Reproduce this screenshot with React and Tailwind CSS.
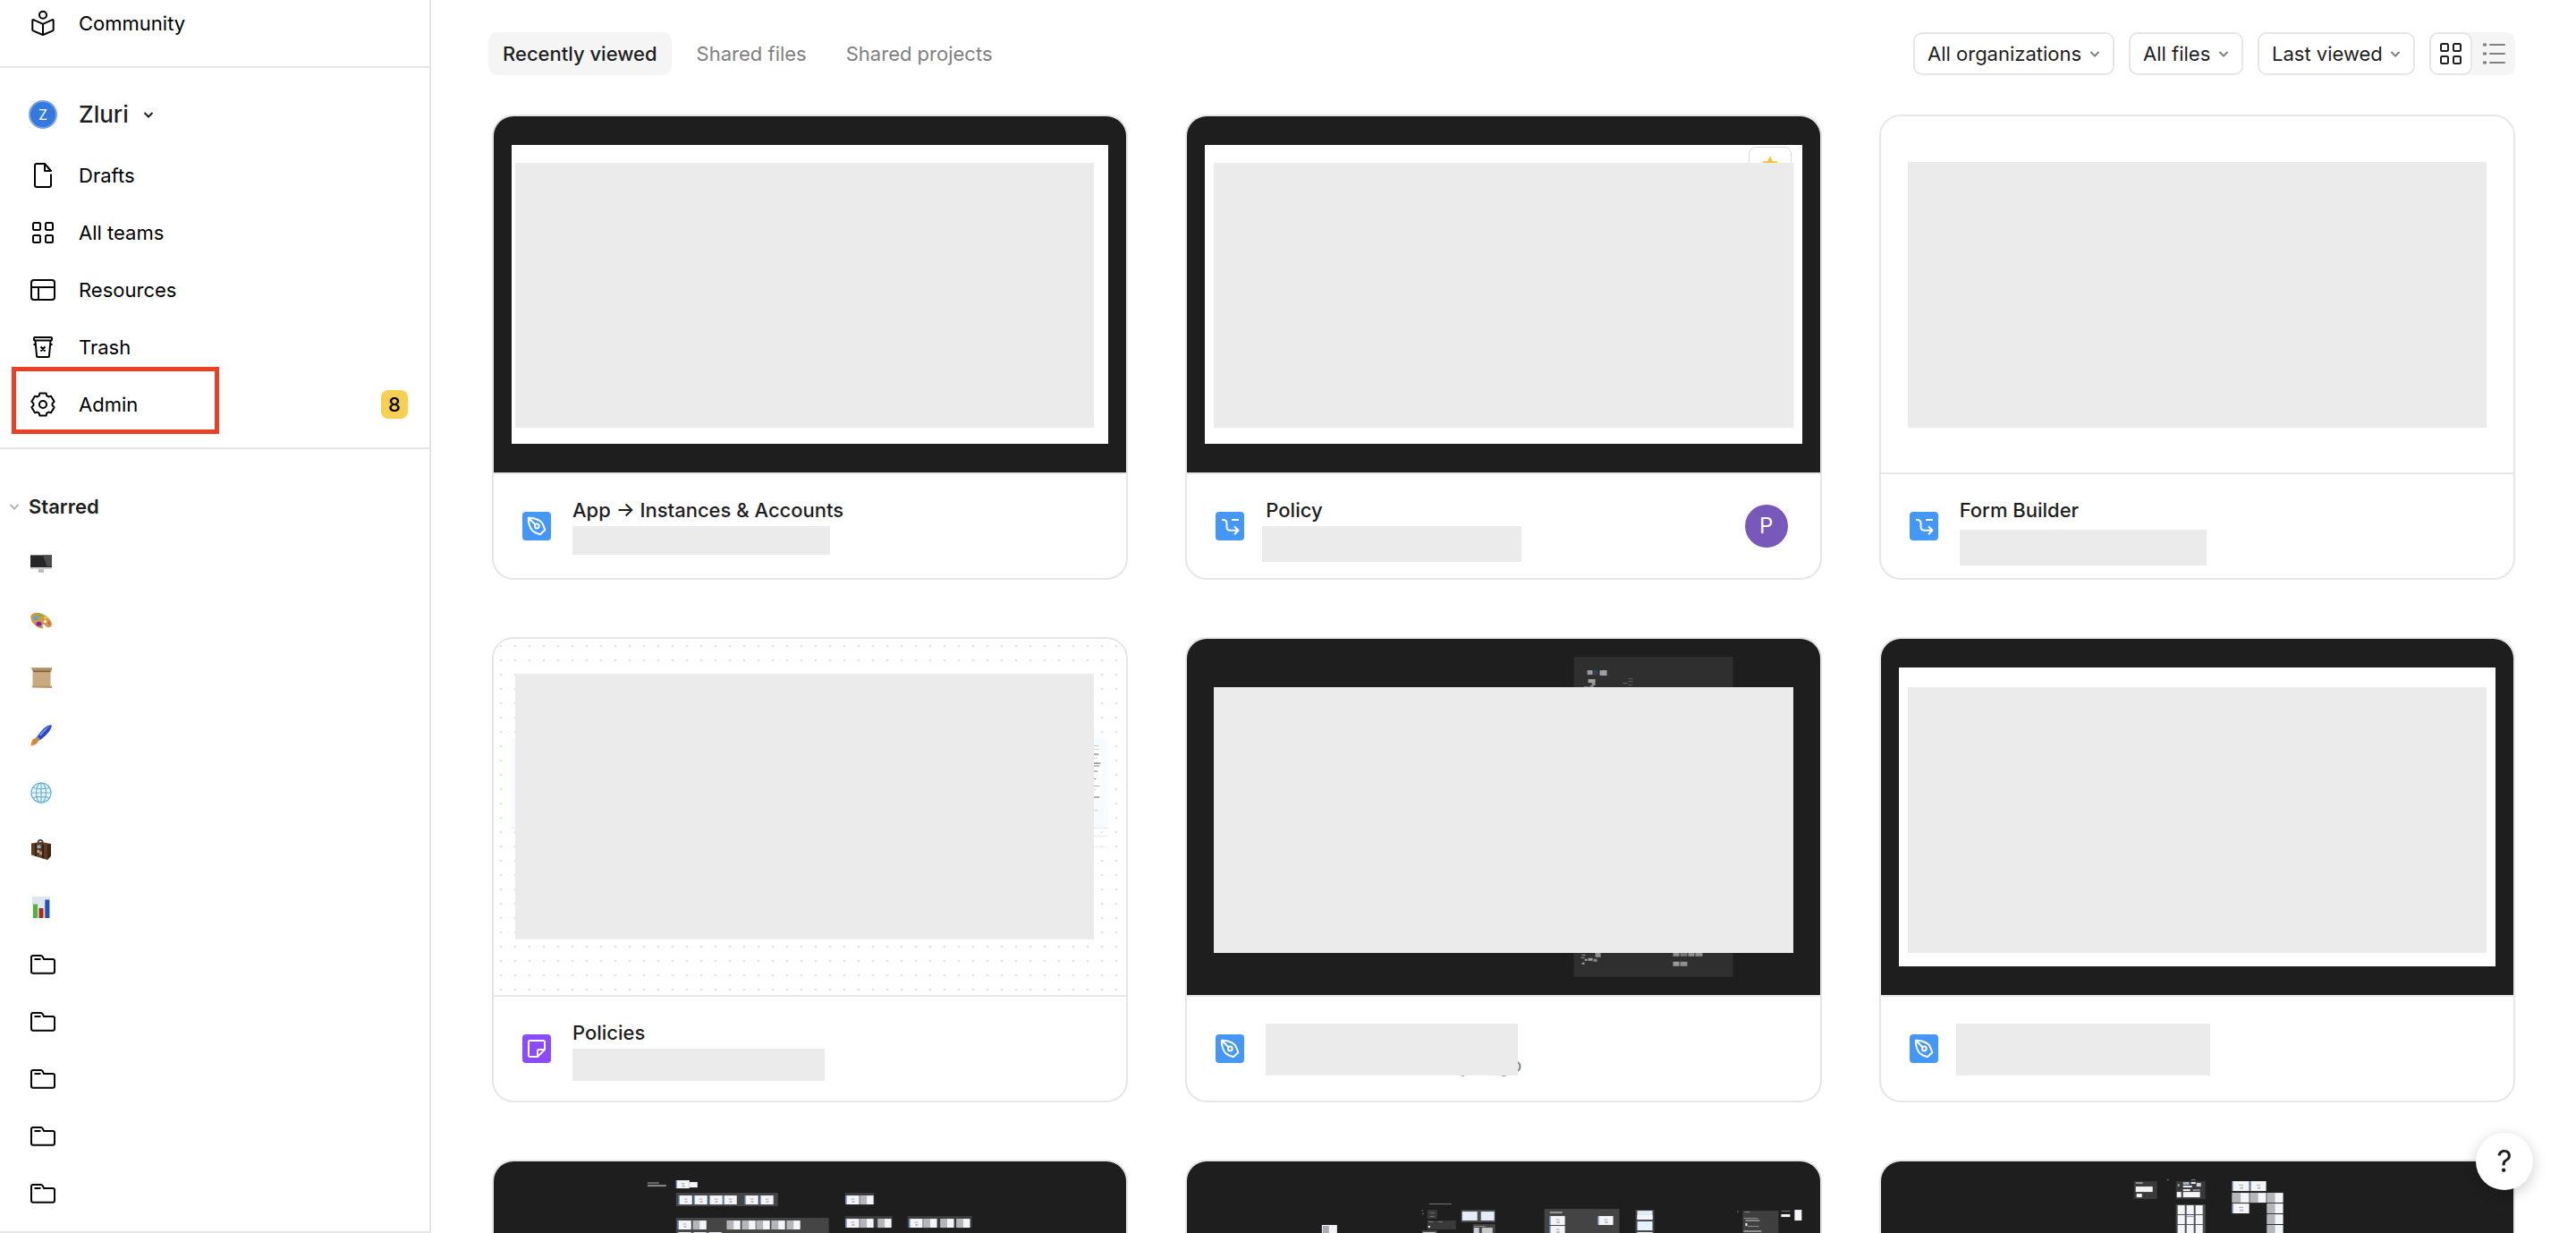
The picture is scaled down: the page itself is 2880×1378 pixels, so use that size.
import React, { useState } from 'react';

const gearPoints = [0, 60, 120, 180, 240, 300]
  .flatMap((angle) => [
    [10.6, angle - 24],
    [13, angle - 16],
    [13, angle + 16],
    [10.6, angle + 24]
  ])
  .map(([r, deg]) => {
    const rad = (deg * Math.PI) / 180;
    return `${(16 + r * Math.sin(rad)).toFixed(2)},${(16 - r * Math.cos(rad)).toFixed(2)}`;
  })
  .join(' ');

function Icon({ children }) {
  return (
    <svg
      className="size-8 shrink-0"
      viewBox="0 0 32 32"
      fill="none"
      stroke="currentColor"
      strokeWidth="2"
      strokeLinejoin="round"
      aria-hidden="true"
    >
      {children}
    </svg>
  );
}

function CommunityIcon() {
  return (
    <Icon>
      <circle cx="16" cy="6.8" r="4" />
      <path d="M16 16.8 5.6 12.1c-.7-.3-1.3.1-1.3.9v10.3c0 .5.2.8.7 1L16 29l11-4.7c.5-.2.7-.5.7-1V13c0-.8-.6-1.2-1.3-.9L16 16.8V29" />
    </Icon>
  );
}

function FileIcon() {
  return (
    <Icon>
      <path d="M25 14.5V27a2 2 0 0 1-2 2H9a2 2 0 0 1-2-2V5a2 2 0 0 1 2-2h9l7 8h-7V3" />
    </Icon>
  );
}

function GridIcon() {
  return (
    <Icon>
      <rect x="5" y="5" width="8" height="8" rx="1.5" />
      <rect x="19" y="5" width="8" height="8" rx="1.5" />
      <rect x="5" y="19" width="8" height="8" rx="1.5" />
      <rect x="19" y="19" width="8" height="8" rx="1.5" />
    </Icon>
  );
}

function ListIcon() {
  return (
    <Icon>
      <path d="M12 6h16M12 16h16M12 26h16" strokeLinecap="round" />
      <path d="M4 6h4M4 16h4M4 26h4" strokeWidth="3" />
    </Icon>
  );
}

function ResourcesIcon() {
  return (
    <Icon>
      <rect x="3" y="5" width="26" height="22" rx="3" />
      <path d="M3 13h26M11 13v14" />
    </Icon>
  );
}

function TrashIcon() {
  return (
    <Icon>
      <rect x="6" y="5" width="20" height="3.5" rx="1" />
      <path d="M7.5 9 9 25.5a1.5 1.5 0 0 0 1.5 1.5h11a1.5 1.5 0 0 0 1.5-1.5L24.5 9M5.5 13H8M24 13h2.5M13.5 15.5l5 5M18.5 15.5l-5 5" />
    </Icon>
  );
}

function GearIcon() {
  return (
    <Icon>
      <polygon points={gearPoints} />
      <circle cx="16" cy="16" r="4" />
    </Icon>
  );
}

function FolderIcon() {
  return (
    <Icon>
      <path d="M3 23.7V8a2 2 0 0 1 2-2h8.8c.8 0 1.3.3 1.7 1l1.6 3H27a2 2 0 0 1 2 2v11.700a2 2 0 0 1-2 2H5a2 2 0 0 1-2-2ZM6.5 10h7" />
    </Icon>
  );
}

function Chevron() {
  return (
    <svg className="h-2 w-3 shrink-0" viewBox="0 0 12 8" fill="none" stroke="currentColor" strokeWidth="2" aria-hidden="true">
      <path d="m1.5 2 4.5 4.5L10.5 2" />
    </svg>
  );
}

function Emoji({ children }) {
  return (
    <svg className="size-8 shrink-0" viewBox="0 0 32 32" aria-hidden="true">
      {children}
    </svg>
  );
}

const starred = [
  {
    name: 'Desktop',
    icon: (
      <Emoji>
        <path d="M11 21h6v5h-6z" fill="#b9bbc0" />
        <rect x="2" y="6" width="24" height="16" rx="1" fill="#cfcfd6" />
        <path d="M2 6.5h24V20H2z" fill="#262626" />
        <path d="M16 6.5h10V19h-5.5z" fill="#4b4b4b" />
      </Emoji>
    )
  },
  {
    name: 'Palette',
    icon: (
      <Emoji>
        <path d="M2.3 11C3 7 9 5.500 15 8c6 2 11 8 11 12 0 3-4 4-6 2.500-1.500-1-2-3-4-2.500-1.500.6 1.200 2.500-.2 4C13 25.500 2 20 2.300 11Z" fill="#cf9a45" />
        <circle cx="18.5" cy="16.5" r="1.6" fill="#fff" />
        <ellipse cx="8" cy="12.5" rx="2.6" ry="2.3" fill="#4aa9e8" />
        <ellipse cx="12.5" cy="9.8" rx="2.5" ry="1.8" fill="#69c22f" />
        <ellipse cx="19" cy="12.5" rx="2.2" ry="1.6" fill="#ecc92f" />
        <ellipse cx="11.5" cy="19.3" rx="3" ry="2.5" fill="#7a1fc4" />
        <ellipse cx="23" cy="18.5" rx="1.5" ry="2.3" transform="rotate(-40 23 18.5)" fill="#e8604c" />
      </Emoji>
    )
  },
  {
    name: 'Scroll',
    icon: (
      <Emoji>
        <path d="M4.5 6h20v19h-20z" fill="#c9a97f" />
        <path d="M3 4.3h23v3.2H4z" fill="#b08c60" />
        <path d="M5 7.5h19.5v1.6H5z" fill="#7d6040" />
        <path d="M3.5 24.5H26v2.600l-22-.6z" fill="#bd9869" />
      </Emoji>
    )
  },
  {
    name: 'Brush',
    icon: (
      <Emoji>
        <path d="M9 18.5C13 11 20 4 25.5 4.3 27 8 19 17.5 12 21.5z" fill="#2a46c4" />
        <path d="M12 15.5C16 10 20 6.5 24 5.5 20 9 17 12 13.5 16.5z" fill="#7e98ee" />
        <path d="m7.5 19 2-2.5 3.5 4-2.5 2z" fill="#8e9298" />
        <path d="M2.5 27.5C3 25 3.5 19.5 7.5 19c2.5.7 3.5 2 3 3.5-1 3.5-5 4.5-8 5Z" fill="#d68731" />
      </Emoji>
    )
  },
  {
    name: 'Globe',
    icon: (
      <Emoji>
        <g fill="none" stroke="#62b2d8" strokeWidth="1.2">
          <circle cx="14" cy="16" r="11" fill="#f0fafe" />
          <ellipse cx="14" cy="16" rx="5.5" ry="11" />
          <path d="M14 5v22M3 16h22M5 10.5c5 1.2 13 1.2 18 0M5 21.5c5-1.2 13-1.2 18 0" />
        </g>
      </Emoji>
    )
  },
  {
    name: 'Luggage',
    icon: (
      <Emoji>
        <path d="M10.5 8c0-4.5 5-4.5 5.5 0" fill="none" stroke="#333" strokeWidth="1.5" />
        <path d="M3 8.5 14 7l11 2v13.5L21 27 3 21.5z" fill="#5f3b22" />
        <path d="m21 10.5 4-1.5v13.5L21 27z" fill="#3b2415" />
        <path d="m7 9 2 .3V23l-2-.6zM15 9.5l2 .3v15.700l-2-.6z" fill="#352012" />
        <path d="M9.5 10.5h4V14h-4z" fill="#7fb6c4" />
        <path d="M9.5 16H12v3H9.5z" fill="#9bc09b" />
        <path d="M12 17.5h3v4h-3z" fill="#b8817a" />
      </Emoji>
    )
  },
  {
    name: 'Reports',
    icon: (
      <Emoji>
        <path d="M4 4h20v24H4z" fill="#dfe6ee" />
        <path d="M5 12.5h5V28H5z" fill="#52b43a" />
        <path d="M11.5 17h5v11h-5z" fill="#b3261e" />
        <path d="M18.3 7.5h5V28h-5z" fill="#2454b0" />
      </Emoji>
    )
  },
  { name: 'Project 1', icon: <FolderIcon /> },
  { name: 'Project 2', icon: <FolderIcon /> },
  { name: 'Project 3', icon: <FolderIcon /> },
  { name: 'Project 4', icon: <FolderIcon /> },
  { name: 'Project 5', icon: <FolderIcon /> }
];

function NavItem({ icon, label, badge, highlighted }) {
  return (
    <a href="#" className="relative flex h-16 items-center gap-6 pr-6 pl-8">
      {icon}
      <span>{label}</span>
      {badge && (
        <span className="ml-auto flex h-8 w-[30px] items-center justify-center rounded-lg bg-[#f7cf52] font-medium">
          {badge}
        </span>
      )}
      {highlighted && (
        <span className="pointer-events-none absolute -top-2.5 left-[13px] h-[75px] w-[232px] border-[5px] border-[#ea4025]" />
      )}
    </a>
  );
}

function Sidebar() {
  return (
    <aside className="flex w-[482px] shrink-0 flex-col overflow-hidden border-r-2 border-b-2 border-[#e6e6e6] text-black">
      <div className="border-b-2 border-[#e6e6e6] pb-4">
        <div className="-mt-1.5">
          <NavItem icon={<CommunityIcon />} label="Community" />
        </div>
      </div>
      <nav className="border-b-2 border-[#e6e6e6] py-4">
        <button className="flex h-[72px] items-center gap-6 pl-8 text-[26px] font-medium text-[#1e1e1e]">
          <span className="flex size-8 items-center justify-center rounded-full border-2 border-[#7ba4e8] bg-[#3578de] text-base font-normal text-white">
            Z
          </span>
          <span className="flex items-center gap-4">
            Zluri
            <Chevron />
          </span>
        </button>
        <NavItem icon={<FileIcon />} label="Drafts" />
        <NavItem icon={<GridIcon />} label="All teams" />
        <NavItem icon={<ResourcesIcon />} label="Resources" />
        <NavItem icon={<TrashIcon />} label="Trash" />
        <NavItem icon={<GearIcon />} label="Admin" badge="8" highlighted />
      </nav>
      <div className="pt-8">
        <button className="flex h-16 items-center gap-2.5 pl-2.5 font-semibold text-[#1e1e1e]">
          <span className="text-[#b3b3b3]">
            <Chevron />
          </span>
          Starred
        </button>
        <ul>
          {starred.map((item) => (
            <li key={item.name}>
              <a href="#" aria-label={item.name} className="flex h-16 items-center pl-8">
                {item.icon}
              </a>
            </li>
          ))}
        </ul>
      </div>
    </aside>
  );
}

const badgeIcons = {
  design: (
    <>
      <path d="M6.8 6.8c3-.4 10 .7 14 4.2 2.2 2 3 5 4.5 9.2l-5.3 5c-3-.8-6-1.7-8.3-3.7C8 18 6.5 11 6.8 6.800Zm0 0 7.700 7.500" />
      <circle cx="16.3" cy="16" r="2.4" />
    </>
  ),
  prototype: <path d="M7 9h1.500c2.500 0 4 1.500 4 4v3.700c0 2.500 1.500 4 4 4H25M18 9h8M21 16.200l4.500 4.500-4.500 4.500" />,
  jam: <path d="M8.500 7h15A1.500 1.500 0 0 1 25 8.500V17l-8 8H8.500A1.500 1.500 0 0 1 7 23.500v-15A1.500 1.500 0 0 1 8.500 7ZM17 25v-6.500a1.500 1.500 0 0 1 1.500-1.500H25" />
};

function FileBadge({ type }) {
  return (
    <svg
      className={`size-8 shrink-0 rounded ${type === 'jam' ? 'bg-[#8b4cf7]' : 'bg-[#4597f7]'}`}
      viewBox="0 0 32 32"
      fill="none"
      stroke="#fff"
      strokeWidth="2"
      strokeLinejoin="round"
      aria-hidden="true"
    >
      {badgeIcons[type]}
    </svg>
  );
}

// [x, y, width, height, fill]
function Canvas({ shapes }) {
  return (
    <svg className="absolute inset-0 size-full" viewBox="0 0 708 398" aria-hidden="true">
      {shapes.map(([x, y, width, height, fill = '#f4f5f8'], i) => (
        <rect key={i} x={x} y={y} width={width} height={height} fill={fill} />
      ))}
    </svg>
  );
}

// small screen frame with a dark left half
const split = (x, y, w = 15, h = 10) => [
  [x, y, w, h],
  [x, y, w / 2, h, '#b4b6ba']
];

const frame = (x, y, w = 15, h = 10) => [
  [x, y, w, h],
  [x, y, 1, h, '#5b7fd6'],
  [x + w * 0.4, y + h * 0.35, w * 0.25, 1, '#a8a8ae'],
  [x + w * 0.45, y + h * 0.6, w * 0.2, 2, '#b9b9c0']
];

const policiesShapes = [
  [20, 111, 667, 101, '#f5fbff'],
  [20, 211, 667, 1, '#d9effc'],
  [670, 118, 10, 62, '#ffffff'],
  [670, 119, 7, 1, '#c4c4c4'],
  [671, 123, 7, 1, '#d4d4d4'],
  [670, 128, 7, 2, '#b0b0b0'],
  [671, 133, 4, 1, '#d4d4d4'],
  [670, 138, 9, 2, '#a5a5a5'],
  [671, 141, 7, 2, '#c0c0c0'],
  [670, 147, 6, 2, '#bdbdbd'],
  [670, 156, 4, 1, '#8a8a8a'],
  [671, 164, 7, 1, '#b0b0b0'],
  [670, 168, 4, 1, '#d0d0d0'],
  [670, 176, 8, 2, '#b0b0b0'],
  [670, 191, 6, 1, '#c8ccd0'],
  [670, 220, 17, 1, '#e8e8e8'],
  [670, 232, 17, 1, '#f0f0f0']
];

const darkPanelShapes = [
  [433, 20, 178, 358, '#2f2f2f'],
  [448, 35, 6, 5, '#9a9a9a'],
  [455, 35, 5, 5, '#2c4456'],
  [462, 35, 8, 6, '#a0a0a4'],
  [449, 45, 8, 4, '#a4a4a4'],
  [453, 49, 4, 3, '#909090'],
  [444, 53, 6, 2, '#777777'],
  [451, 52, 4, 2, '#8a8a8a'],
  [488, 49, 5, 1, '#6d6d6d'],
  [494, 44, 5, 1, '#606060'],
  [494, 47, 5, 1, '#606060'],
  [494, 51, 5, 1, '#606060'],
  [457, 351, 6, 5, '#8f8f8f'],
  [442, 353, 4, 1, '#a0a0a0'],
  [441, 356, 4, 1, '#a0a0a0'],
  [445, 358, 3, 2, '#a0a0a0'],
  [449, 357, 5, 3, '#a0a0a0'],
  [455, 358, 4, 3, '#8a8a8a'],
  [442, 362, 3, 2, '#a0a0a0'],
  [544, 351, 7, 4, '#8f8f92'],
  [552, 351, 8, 4, '#77777a'],
  [561, 351, 7, 4, '#8f8f92'],
  [569, 351, 8, 4, '#8f8f92'],
  [544, 361, 7, 5, '#9a9a9d'],
  [552, 361, 8, 5, '#8f8f92']
];

const flowShapes = [
  [172, 23, 13, 2, '#6a6a6a'],
  [172, 26, 21, 2, '#8c8c8c'],
  [204, 35, 114, 15, '#454545'],
  [393, 35, 33, 13, '#3c3c3c'],
  [393, 61, 53, 13, '#3c3c3c'],
  [463, 61, 72, 13, '#3c3c3c'],
  [204, 63, 171, 80, '#454545'],
  ...frame(204, 21, 15, 9),
  [219, 23, 9, 6],
  ...frame(207, 38),
  ...frame(224, 38),
  ...frame(241, 38),
  ...frame(257, 38),
  ...frame(281, 38),
  ...frame(298, 38),
  ...frame(394, 38),
  ...split(410, 38),
  ...frame(394, 64),
  ...split(410, 64),
  ...split(430, 64),
  ...frame(465, 64),
  ...split(481, 64),
  ...split(500, 64),
  ...split(518, 64),
  ...frame(206, 66),
  ...split(223, 66),
  ...split(261, 66),
  ...split(278, 66),
  ...split(294, 66),
  ...split(311, 66),
  ...split(328, 66),
  ...frame(206, 79),
  ...frame(223, 79),
  ...frame(240, 79)
];

const boardShapes = [
  [151, 71, 17, 30],
  [152, 72, 7, 30, '#a9abb0'],
  [271, 47, 25, 1, '#7a7a7a'],
  [263, 54, 1, 2, '#777777'],
  [263, 58, 2, 1, '#777777'],
  [269, 54, 11, 10, '#3a3a3a'],
  [272, 57, 5, 1, '#8f5f5f'],
  [272, 61, 5, 1, '#777777'],
  [269, 66, 32, 10, '#3a3a3a'],
  [270, 67, 6, 1, '#777777'],
  [281, 67, 5, 1, '#777777'],
  [270, 72, 2, 2],
  [263, 77, 17, 10, '#4a4a4a'],
  [264, 79, 14, 8, '#cfcfcf'],
  [307, 54, 38, 14, '#4a4a4a'],
  [308, 56, 17, 10, '#e6ebf8'],
  [329, 56, 15, 10, '#e6ebf8'],
  [320, 70, 25, 20, '#454545'],
  [321, 72, 13, 1, '#909090'],
  [321, 74, 6, 8, '#d0cde0'],
  [330, 74, 12, 8, '#c8c8c8'],
  [400, 53, 84, 60, '#444444'],
  [406, 56, 14, 2, '#9a9a9a'],
  ...frame(406, 61, 17, 10),
  ...frame(406, 72, 17, 10),
  ...frame(460, 61, 17, 10),
  [502, 54, 21, 50, '#454545'],
  [504, 55, 17, 10, '#dcebf5'],
  [504, 60, 17, 5],
  [504, 67, 17, 10, '#e3f2fd'],
  [504, 79, 17, 10],
  [616, 55, 1, 2, '#777777'],
  [622, 55, 40, 50, '#3f3f3f'],
  [624, 56, 6, 1, '#888888'],
  [623, 63, 16, 1, '#909090'],
  [625, 65, 16, 2, '#8a8a8a'],
  [625, 69, 2, 3],
  [627, 72, 13, 1, '#909090'],
  [623, 77, 20, 2, '#909090'],
  [665, 55, 10, 1, '#777777'],
  [665, 59, 10, 3],
  [680, 54, 8, 12]
];

const screensShapes = [
  [320, 20, 2, 1, '#888888'],
  [347, 20, 5, 1, '#888888'],
  [283, 22, 26, 20, '#3a3a3a'],
  [285, 23, 8, 2, '#909090'],
  [285, 28, 19, 6],
  [286, 36, 6, 4],
  [330, 22, 33, 20, '#383838'],
  [332, 25, 2, 3, '#a0a0a0'],
  [338, 23, 7, 3, '#a8b4cc'],
  [347, 23, 5, 2],
  [338, 27, 10, 2],
  [353, 24, 5, 4, '#cfd4e0'],
  [338, 31, 8, 2],
  [349, 31, 8, 2, '#909090'],
  [331, 34, 5, 6],
  [338, 34, 19, 6],
  [330, 48, 33, 60, '#505050'],
  [332, 49, 8, 10],
  [342, 49, 8, 10],
  [352, 49, 8, 10],
  [332, 60, 8, 10],
  [342, 60, 8, 10],
  [342, 61, 8, 1, '#7f9fd8'],
  [352, 60, 8, 10],
  [332, 71, 8, 20],
  [342, 71, 8, 20],
  [352, 71, 8, 20],
  ...frame(393, 22, 19, 11),
  ...frame(413, 22, 18, 11),
  ...split(393, 35, 19, 11),
  ...split(413, 35, 18, 11),
  ...split(432, 35, 18, 11),
  ...frame(393, 47, 19, 11),
  ...split(432, 47, 18, 11),
  ...split(432, 59, 18, 11),
  ...split(432, 71, 18, 11)
];

const files = [
  {
    id: 1,
    title: 'App → Instances & Accounts',
    type: 'design',
    thumb: 'bg-[#1e1e1e] px-5 py-8',
    page: 'pt-5 pr-4 pb-[18px] pl-1',
    meta: 'h-8 w-72'
  },
  {
    id: 2,
    title: 'Policy',
    type: 'prototype',
    thumb: 'bg-[#1e1e1e] px-5 py-8',
    page: 'pt-5 pr-2.5 pb-[18px] pl-2.5',
    meta: '-ml-1 h-10 w-[290px]',
    avatar: 'P',
    star: true
  },
  {
    id: 3,
    title: 'Form Builder',
    type: 'prototype',
    thumb: 'bg-white px-[30px] pt-[51px] pb-[50px]',
    meta: 'mt-1 h-10 w-[276px]'
  },
  {
    id: 4,
    title: 'Policies',
    type: 'jam',
    thumb:
      'bg-white bg-[radial-gradient(#dedede_1px,transparent_1px)] bg-[length:16px_16px] pt-[39px] pr-9 pb-[62px] pl-6',
    shapes: policiesShapes,
    meta: 'h-9 w-[282px]'
  },
  {
    id: 5,
    type: 'design',
    thumb: 'bg-[#1e1e1e] px-[30px] pt-[54px] pb-[47px]',
    shapes: darkPanelShapes,
    meta: 'mt-1 h-[58px] w-[282px]',
    age: 'days ago'
  },
  {
    id: 6,
    type: 'design',
    thumb: 'bg-[#1e1e1e] px-5 py-8',
    page: 'pt-[22px] pr-2.5 pb-[15px] pl-2.5',
    meta: 'mt-1 -ml-1 h-[58px] w-[284px]'
  },
  { id: 7, type: 'design', thumb: 'bg-[#1e1e1e]', shapes: flowShapes, bare: true },
  { id: 8, type: 'design', thumb: 'bg-[#1e1e1e]', shapes: boardShapes, bare: true },
  { id: 9, type: 'design', thumb: 'bg-[#1e1e1e]', shapes: screensShapes, bare: true }
];

function FileCard({ file }) {
  return (
    <article className="overflow-hidden rounded-3xl border-2 border-[#e6e6e6] bg-white">
      <div className={`relative aspect-video ${file.thumb}`}>
        {file.shapes && <Canvas shapes={file.shapes} />}
        {file.page && (
          <div className={`relative h-full bg-white ${file.page}`}>
            {file.star && (
              <span className="absolute top-0.5 right-3 flex h-8 w-12 justify-center rounded-lg border border-[#dcdcdc] bg-white pt-2 text-[#f5c431]">
                <svg className="size-5" viewBox="0 0 20 20" fill="currentColor" aria-hidden="true">
                  <path d="m10 1 2.7 6 6.3.6-4.8 4.3 1.5 6.3L10 15l-5.7 3.2 1.5-6.3L1 7.6 7.3 7z" />
                </svg>
              </span>
            )}
            <div className="relative h-full bg-[#ebebeb]" />
          </div>
        )}
        {!file.page && !file.bare && <div className="relative h-full bg-[#ebebeb]" />}
      </div>
      <div className="flex h-[118px] items-center gap-6 border-t-2 border-[#e6e6e6] px-8">
        <FileBadge type={file.type} />
        <div className="flex-1 self-start pt-[26px]">
          {file.title && <h2 className="h-8 truncate leading-7 font-medium text-[#1e1e1e]">{file.title}</h2>}
          {file.meta && (
            <div className="relative">
              {file.age && (
                <p className="absolute bottom-0.5 left-0 w-[286px] text-right leading-5 text-[#808080]">{file.age}</p>
              )}
              <div className={`relative bg-[#ebebeb] ${file.meta}`} />
            </div>
          )}
        </div>
        {file.avatar && (
          <span className="mr-1 flex size-12 items-center justify-center rounded-full bg-[#7958bb] text-2xl text-white">
            {file.avatar}
          </span>
        )}
      </div>
    </article>
  );
}

function FilterSelect({ label, options }) {
  return (
    <div className="flex h-12 items-center gap-2 rounded-[10px] border-2 border-[#e6e6e6] px-3.5 text-[#1e1e1e]">
      <select aria-label={label} className="appearance-none bg-transparent outline-none">
        {options.map((option) => (
          <option key={option}>{option}</option>
        ))}
      </select>
      <span className="pointer-events-none text-[#808080]">
        <Chevron />
      </span>
    </div>
  );
}

const tabs = ['Recently viewed', 'Shared files', 'Shared projects'];

export default function App() {
  const [activeTab, setActiveTab] = useState('Recently viewed');
  const [view, setView] = useState('grid');

  return (
    <div className="flex h-screen overflow-hidden bg-white font-['Inter',sans-serif] text-[22px] leading-8">
      <Sidebar />
      <main className="min-w-0 flex-1 overflow-hidden pr-[68px] pl-16">
        <header className="flex items-center justify-between pt-9">
          <div className="flex gap-3">
            {tabs.map((tab) => (
              <button
                key={tab}
                onClick={() => setActiveTab(tab)}
                className={`h-12 rounded-[10px] px-4 ${
                  activeTab === tab ? 'bg-[#f5f5f5] font-medium text-[#1e1e1e]' : 'text-[#808080]'
                }`}
              >
                {tab}
              </button>
            ))}
          </div>
          <div className="flex gap-4">
            <FilterSelect label="Organization" options={['All organizations']} />
            <FilterSelect label="File type" options={['All files']} />
            <FilterSelect label="Sort by" options={['Last viewed']} />
            <div className="flex rounded-[10px] bg-[#f5f5f5]">
              <button
                aria-label="Grid view"
                onClick={() => setView('grid')}
                className={`flex size-12 items-center justify-center rounded-[10px] ${
                  view === 'grid' ? 'border-2 border-[#e6e6e6] bg-white text-[#1e1e1e]' : 'text-[#808080]'
                }`}
              >
                <GridIcon />
              </button>
              <button
                aria-label="List view"
                onClick={() => setView('list')}
                className={`flex size-12 items-center justify-center rounded-[10px] ${
                  view === 'list' ? 'border-2 border-[#e6e6e6] bg-white text-[#1e1e1e]' : 'text-[#808080]'
                }`}
              >
                <ListIcon />
              </button>
            </div>
          </div>
        </header>
        <section className="grid grid-cols-3 gap-16 pt-11 pl-1">
          {files.map((file) => (
            <FileCard key={file.id} file={file} />
          ))}
        </section>
      </main>
      <button
        aria-label="Help"
        className="fixed right-12 bottom-12 flex size-16 items-center justify-center rounded-full bg-white text-[34px] text-[#1e1e1e] shadow-[0_4px_16px_rgba(0,0,0,0.2)]"
      >
        ?
      </button>
    </div>
  );
}
